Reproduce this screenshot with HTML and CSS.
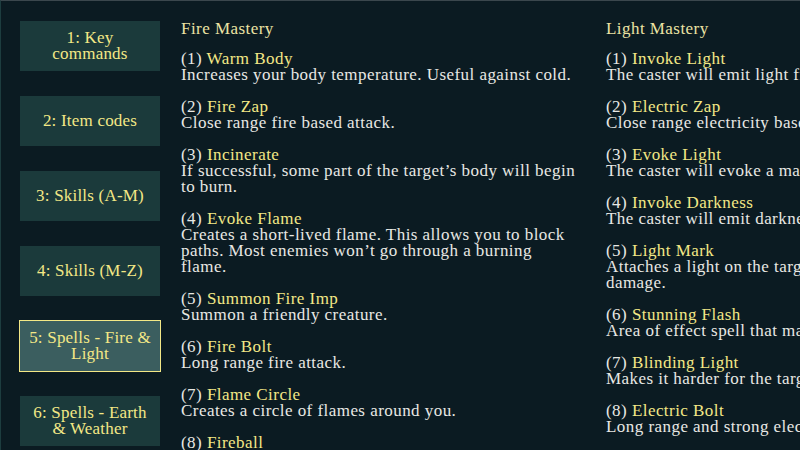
FILE: index.html
```html
<!DOCTYPE html>
<html>
<head>
<meta charset="utf-8">
<link rel="stylesheet" href="styles.css">
</head>
<body>
<div class="page">
  <nav class="sidebar">
    <div class="btn">1: Key commands</div>
    <div class="btn">2: Item codes</div>
    <div class="btn">3: Skills (A-M)</div>
    <div class="btn">4: Skills (M-Z)</div>
    <div class="btn selected">5: Spells - Fire &amp; Light</div>
    <div class="btn">6: Spells - Earth &amp; Weather</div>
  </nav>
  <main class="content">
    <section class="col">
      <h2 class="title">Fire Mastery</h2>
      <div class="item"><div>(1) <span class="name">Warm Body</span></div><div>Increases your body temperature. Useful against cold.</div></div>
      <div class="item"><div>(2) <span class="name">Fire Zap</span></div><div>Close range fire based attack.</div></div>
      <div class="item"><div>(3) <span class="name">Incinerate</span></div><div>If successful, some part of the target’s body will begin to burn.</div></div>
      <div class="item"><div>(4) <span class="name">Evoke Flame</span></div><div>Creates a short-lived flame. This allows you to block paths. Most enemies won’t go through a burning flame.</div></div>
      <div class="item"><div>(5) <span class="name">Summon Fire Imp</span></div><div>Summon a friendly creature.</div></div>
      <div class="item"><div>(6) <span class="name">Fire Bolt</span></div><div>Long range fire attack.</div></div>
      <div class="item"><div>(7) <span class="name">Flame Circle</span></div><div>Creates a circle of flames around you.</div></div>
      <div class="item"><div>(8) <span class="name">Fireball</span></div><div>Launches a ball of fire that explodes on impact.</div></div>
    </section>
    <section class="col">
      <h2 class="title">Light Mastery</h2>
      <div class="item"><div>(1) <span class="name">Invoke Light</span></div><div>The caster will emit light from the body.</div></div>
      <div class="item"><div>(2) <span class="name">Electric Zap</span></div><div>Close range electricity based attack.</div></div>
      <div class="item"><div>(3) <span class="name">Evoke Light</span></div><div>The caster will evoke a magical light orb.</div></div>
      <div class="item"><div>(4) <span class="name">Invoke Darkness</span></div><div>The caster will emit darkness around.</div></div>
      <div class="item"><div>(5) <span class="name">Light Mark</span></div><div>Attaches a light on the target, causing extra<br>damage.</div></div>
      <div class="item"><div>(6) <span class="name">Stunning Flash</span></div><div>Area of effect spell that may stun.</div></div>
      <div class="item"><div>(7) <span class="name">Blinding Light</span></div><div>Makes it harder for the target to see.</div></div>
      <div class="item"><div>(8) <span class="name">Electric Bolt</span></div><div>Long range and strong electric attack.</div></div>
    </section>
  </main>
</div>
</body>
</html>
```

FILE: styles.css
```css
html, body {
  margin: 0;
  padding: 0;
}
body {
  background: #0b1b22;
  width: 800px;
  height: 450px;
  overflow: hidden;
  box-sizing: border-box;
  border-top: 1px solid #3b474d;
  border-left: 1px solid #1d3d3f;
  font-family: "Liberation Serif", "Times New Roman", serif;
  font-size: 17px;
  letter-spacing: 0.45px;
  line-height: 16px;
  color: #e8e8e4;
}
.page {
  display: flex;
  align-items: flex-start;
  gap: 21px;
}
.sidebar {
  flex: 0 0 140px;
  display: flex;
  flex-direction: column;
  gap: 25px;
  padding: 20px 0 0 19px;
}
.btn {
  height: 50px;
  background: #1b3a3b;
  color: #f3e886;
  display: flex;
  align-items: center;
  justify-content: center;
  text-align: center;
  padding: 0 8px;
  box-sizing: border-box;
  letter-spacing: 0.2px;
}
.btn.selected {
  background: #3b5e5f;
  outline: 1px solid #f3e886;
}
.content {
  display: flex;
  gap: 27px;
  padding-top: 20px;
  flex: 0 0 auto;
}
.col {
  width: 398px;
  flex: 0 0 398px;
}
.title {
  margin: 0 0 14px 0;
  font-size: 17px;
  font-weight: normal;
  color: #ece3a4;
  line-height: 16px;
}
.item {
  margin-bottom: 16px;
}
.name {
  color: #f3e886;
}
```
